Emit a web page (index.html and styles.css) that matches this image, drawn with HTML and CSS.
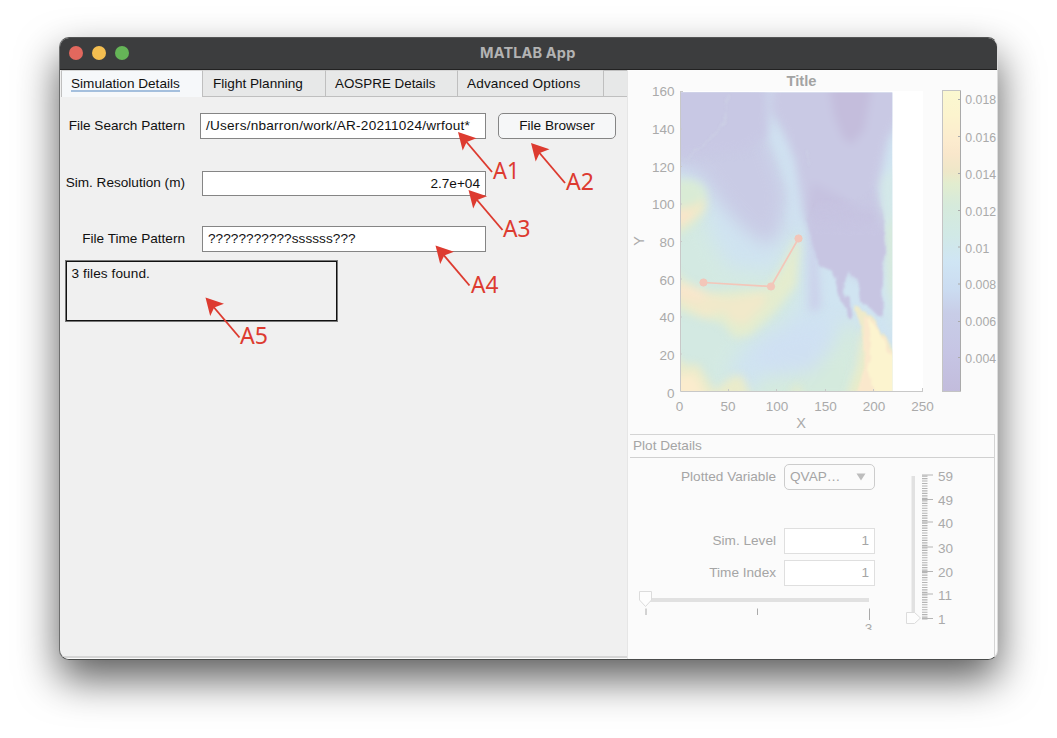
FILE: index.html
```html
<!DOCTYPE html>
<html lang="en">
<head>
<meta charset="utf-8">
<title>MATLAB App</title>
<link rel="stylesheet" href="styles.css">
</head>
<body>
<main class="window">
  <header class="titlebar">
    <div class="lights"><i class="light close"></i><i class="light minimize"></i><i class="light zoom"></i></div>
    <h1 class="app-title">MATLAB App</h1>
  </header>
  <div class="content">
    <section class="left">
      <nav class="tabs">
        <span class="tab active"><span class="tab-text">Simulation Details</span></span>
        <span class="tab t2">Flight Planning</span>
        <span class="tab t3">AOSPRE Details</span>
        <span class="tab t4">Advanced Options</span>
        <span class="tab-rest"></span>
      </nav>
      <div class="form">
        <div class="row r1"><label>File Search Pattern</label><div class="field path"><span>/Users/nbarron/work/AR-20211024/wrfout*</span></div><button class="browse">File Browser</button></div>
        <div class="row r2"><label>Sim. Resolution (m)</label><div class="field num">2.7e+04</div></div>
        <div class="row r3"><label>File Time Pattern</label><div class="field pattern">???????????ssssss???</div></div>
        <div class="message">3 files found.</div>
      </div>
    </section>
    <section class="right">
      <svg class="chart" width="367" height="364" viewBox="630 70 367 364">
        <defs>
          <clipPath id="area"><rect x="681" y="92.5" width="211.3" height="298.5"/></clipPath>
          <filter id="soft" x="-30%" y="-30%" width="160%" height="160%" color-interpolation-filters="sRGB"><feGaussianBlur stdDeviation="9"/></filter>
          <filter id="mid" x="-50%" y="-30%" width="200%" height="160%" color-interpolation-filters="sRGB"><feGaussianBlur stdDeviation="4"/></filter>
          <filter id="edge" x="-20%" y="-20%" width="140%" height="140%" color-interpolation-filters="sRGB"><feTurbulence type="fractalNoise" baseFrequency="0.13 0.06" numOctaves="3" seed="4" result="n"/><feDisplacementMap in="SourceGraphic" in2="n" scale="7" xChannelSelector="R" yChannelSelector="G"/><feGaussianBlur stdDeviation="0.9"/></filter>
          <linearGradient id="fade" x1="0" y1="0" x2="0" y2="1"><stop offset="0" stop-color="#c7c5e2" stop-opacity="0"/><stop offset=".35" stop-color="#c7c5e2"/><stop offset="1" stop-color="#c7c5e2"/></linearGradient>
          <linearGradient id="bar" x1="0" y1="0" x2="0" y2="1">
            <stop offset="0" stop-color="#fbf8d0"/><stop offset=".08" stop-color="#fcf4ce"/><stop offset=".17" stop-color="#fcebce"/><stop offset=".21" stop-color="#f9e7cb"/><stop offset=".27" stop-color="#eee7c8"/><stop offset=".31" stop-color="#e2edcf"/><stop offset=".38" stop-color="#d6eadb"/><stop offset=".48" stop-color="#d1e9e6"/><stop offset=".57" stop-color="#cfe5f4"/><stop offset=".66" stop-color="#cbdcf1"/><stop offset=".74" stop-color="#c8cde7"/><stop offset=".87" stop-color="#c6c5e4"/><stop offset="1" stop-color="#c2bcdc"/>
          </linearGradient>
        </defs>
        <rect x="680" y="91" width="243" height="300" fill="#fff"/>
        <g clip-path="url(#area)">
          <rect x="681" y="92" width="212" height="300" fill="#d0e4f1"/>
          <g filter="url(#soft)">
            <path fill="#d3e9e2" d="M660 185L700 195 712 240 730 268 775 272 797 225 800 300 780 325 745 345 728 370 760 410H660Z"/>
            <path fill="#d4eadd" d="M845 320L862 330 860 410H745L760 378 810 372 835 345Z"/>
            <path fill="#cfe0f2" d="M765 335L825 318 830 350 812 372 775 375 752 362Z"/>
            <path fill="#c9cbe5" d="M655 65H770L768 135 782 175 788 198 779 237 765 245 745 230 725 210 712 192 700 175 655 163Z"/>
          </g>
          <g filter="url(#mid)">
            <path fill="#c8c8e4" d="M660 75H768V135L745 150 690 155 660 160Z"/>
            <path fill="#c9c9e4" d="M772 75H905V110L888 140 878 188 880 215 882 245 879 270 870 285 845 270 825 262 812 240 804 215 799 185 794 158 782 130 771 112Z"/>
            <path fill="#cbd0ea" d="M809 228L817 255 821 305 815 313 809 309Z"/>
            <path fill="#cfe0f0" d="M767 85H769L772 125 789 143 797 170 800 212 797 232 790 222 791 190 780 158 769 132Z"/>
            <path fill="#c4bddc" d="M829 85H872L864 130 852 144 843 138 834 115Z"/>
            <path fill="#c6c2e0" d="M812 182L838 195 858 210 876 212 881 250 870 268 835 262 818 248 806 212Z"/>
            <path fill="#d3e8e8" d="M880 180L896 165V340L887 310 884 260Z"/>
            <path fill="#d7ead9" d="M887 230L898 210V310L889 290Z"/>
          </g>
          <path fill="url(#fade)" filter="url(#edge)" d="M807 218L820 200 860 200 876 188 883 216 886 247 882 271 883 316 877 315 868 306 860 301 857 280 847 272 844 290 854 314 851 318 840 298 833 272 825 268 818 264Z"/>
          <g filter="url(#mid)">
            <path fill="#d9ebd5" d="M672 181Q697 175 706 190L707 208 695 226 672 240Z"/>
            <path fill="#f0e9c8" d="M672 209L693 205 706 198 703 212 680 230H672Z"/>
            <path fill="#fbe5cb" d="M672 212L692 211 694 215 680 223H672Z"/>
            <path fill="#e4ecce" d="M672 268L684 280 710 292 768 288 782 268 797 236 800 245 796 285 775 312 750 335 735 338 722 323 700 318 672 308Z"/>
            <path fill="#f1e9ca" d="M674 280L702 291 727 299 766 293 764 305 744 325 730 320 725 311 704 317 676 300Z"/>
            <path fill="#f9e6cc" d="M672 283L692 287 708 296 700 301 672 294Z"/>
            <path fill="#eaebca" d="M672 354L686 365 698 364 715 391 731 377 742 375 752 400H672Z"/>
            <path fill="#fbeccd" d="M672 376L695 374 708 400H672Z"/>
            <path fill="#e6ebca" d="M789 400L797 382 804 400Z"/>
            <path fill="#e8ecca" d="M862 330L898 353V400H845L856 367Z"/>
          </g>
          <g filter="url(#edge)">
            <path fill="#eeeac9" d="M854 304L864 310 877 322 890 344 896 358V398H862L865 343 859 325Z"/>
            <path fill="#fae8cc" d="M864 314L879 326 890 350 897 358V398H856L865 366 864 336Z"/>
            <path fill="#fcf4cf" d="M869 320L880 330 888 352 898 359V398H876L867 371 871 343Z"/>
          </g>
          <path fill="none" stroke="#cfd5e6" stroke-width="1.500" opacity=".6" filter="url(#edge)" d="M728 94L725 121 711 140 683 160M807 150L809 166"/>
        </g>
        <g stroke="#c8c8c8" fill="none"><path d="M680.5 91V391.500H923M680 91.500h3M680 129h2M680 166.500h2M680 204h2M680 241.500h2M680 279h2M680 317h2M680 354h2M728.500 391v-2M776.500 391v-2M825.500 391v-2M873.500 391v-2M922.500 391v-3"/></g>
        <g stroke="#f3c6b9" fill="#f3c6b9"><path fill="none" stroke-width="1.7" d="M703.500 282.500L771 286.500 798.500 238.500"/><circle cx="703.500" cy="282.500" r="3.600"/><circle cx="771" cy="286.500" r="3.600"/><circle cx="798.500" cy="238.500" r="3.600"/></g>
        <rect x="942.500" y="90.500" width="18" height="301" fill="url(#bar)" stroke="#c4c4c4"/>
        <path fill="none" stroke="#aaa" d="M960.500 91V391M958 99.500h2M958 136.500h2M958 173.500h2M958 210.500h2M958 247h2M958 284h2M958 321.500h2M958 357.500h2"/>
        <g class="ticks y-ticks"><text x="674.500" y="96">160</text><text x="674.500" y="134">140</text><text x="674.500" y="171.500">120</text><text x="674.500" y="209">100</text><text x="674.500" y="247">80</text><text x="674.500" y="284.500">60</text><text x="674.500" y="322">40</text><text x="674.500" y="360">20</text><text x="674.500" y="397.500">0</text></g>
        <g class="ticks x-ticks"><text x="679.500" y="411">0</text><text x="728" y="411">50</text><text x="777" y="411">100</text><text x="825.500" y="411">150</text><text x="874" y="411">200</text><text x="922.500" y="411">250</text></g>
        <g class="ticks bar-ticks"><text x="965.300" y="104">0.018</text><text x="965.300" y="141.500">0.016</text><text x="965.300" y="178.500">0.014</text><text x="965.300" y="215.500">0.012</text><text x="965.300" y="252.500">0.01</text><text x="965.300" y="289">0.008</text><text x="965.300" y="326">0.006</text><text x="965.300" y="363">0.004</text></g>
        <text class="plot-title" x="801.500" y="86">Title</text>
        <text class="axis" x="801" y="428">X</text>
        <text class="axis" transform="translate(644 241) rotate(-90)">Y</text>
      </svg>
      <div class="panel">
        <h2 class="panel-title">Plot Details</h2>
        <div class="panel-body">
          <div class="controls">
            <div class="control c1"><label>Plotted Variable</label><div class="select"><span>QVAP…</span><svg width="10" height="8" viewBox="0 0 10 8"><path d="M.5.5H9.500L5 7.500Z" fill="#bdbdbd"/></svg></div></div>
            <div class="control c2"><label>Sim. Level</label><div class="small-field">1</div></div>
            <div class="control c3"><label>Time Index</label><div class="small-field">1</div></div>
            <svg class="hslider" width="245" height="42" viewBox="635 588 245 42"><rect x="646" y="598" width="223" height="4" fill="#e1e1e1"/><path d="M639.500 591.500H651.500V600L645.500 606.500 639.500 600Z" fill="#fdfdfd" stroke="#dcdcdc"/><path d="M646 608.500V615M757.500 608.500V615M869.500 608.500V620" stroke="#aaa"/><text class="ticks" x="868.500" y="632.500" text-anchor="middle">3</text></svg>
          </div>
          <svg class="vslider" width="60" height="170" viewBox="900 465 60 170">
            <rect x="911.500" y="476" width="3.500" height="142" fill="#e1e1e1"/>
            <path d="M924.750 475.500V619.500" stroke="#b4b4b4" stroke-width="5.500" stroke-dasharray="1.150 1.325"/>
            <path d="M922 475h11M922 499.500h11M922 522h11M922 547h11M922 571.500h11M922 594h11M922 618.500h11" stroke="#b5b5b5"/>
            <path d="M906.500 612.500H914.500L920.500 618 914.500 623.500H906.500Z" fill="#fdfdfd" stroke="#dcdcdc"/>
            <g class="ticks v-ticks"><text x="938" y="480.500">59</text><text x="938" y="505">49</text><text x="938" y="527.500">40</text><text x="938" y="552.500">30</text><text x="938" y="577">20</text><text x="938" y="599.500">11</text><text x="938" y="624">1</text></g>
          </svg>
        </div>
      </div>
    </section>
  </div>
</main>
<svg class="annotations" width="1057" height="738" viewBox="0 0 1057 738">
  <defs><g id="arrow"><path d="M6 7L34 40" stroke="#dd3b30" stroke-width="1.900" fill="none"/><path d="M0 0L18.500 6.200 8.700 10 4.700 18.500Z" fill="#dd3b30"/></g></defs>
  <use href="#arrow" x="458" y="132"/><use href="#arrow" x="531" y="143"/><use href="#arrow" x="468.500" y="190"/><use href="#arrow" x="435.500" y="245.500"/><use href="#arrow" x="205.500" y="297.500"/>
  <text x="493" y="179" textLength="26.500" lengthAdjust="spacingAndGlyphs">A1</text><text x="566" y="190" textLength="28" lengthAdjust="spacingAndGlyphs">A2</text><text x="503" y="237" textLength="27.500" lengthAdjust="spacingAndGlyphs">A3</text><text x="471" y="293" textLength="27.500" lengthAdjust="spacingAndGlyphs">A4</text><text x="240" y="344" textLength="28" lengthAdjust="spacingAndGlyphs">A5</text>
</svg>
</body>
</html>
```

FILE: styles.css
```css
* { box-sizing: border-box; }
body { margin: 0; height: 738px; padding: 37px 59px 0 59px; overflow: hidden; background: #fff; font: 13.600px "Liberation Sans", Arial, sans-serif; color: #111; }
.window { width: 939px; height: 623px; display: flex; flex-direction: column; border-radius: 10px; overflow: hidden; background: #f0f0f0; border: 1px solid #6d6e6e; border-top-color: #535454; border-right-color: #dcdcdc; border-bottom-color: #4a4c4b; box-shadow: 0 19px 42px rgba(0,0,0,.64); }
.titlebar { flex: none; height: 32px; display: grid; grid-template-columns: 1fr auto 1fr; align-items: center; padding: 0 10px 2px 8.500px; background: #3c3d3e; border-bottom: 1px solid #222; }
.lights { display: flex; gap: 9px; }
.light { width: 14px; height: 14px; border-radius: 50%; }
.close { background: #e2685e; }
.minimize { background: #f4be50; }
.zoom { background: #65b557; }
.app-title { margin: 0; font: 700 14.500px Inter, sans-serif; letter-spacing: .15px; color: #b3b3b3; }
.content { flex: 1; display: flex; min-height: 0; }
.left { width: 567px; padding-left: 1px; display: flex; flex-direction: column; border-bottom: 1px solid #fafafa; box-shadow: inset 0 -2px #d5d5d5; }
.tabs { height: 27px; display: flex; line-height: 26px; }
.tab { background: #e7e8e8; border-left: 1px solid #bfbfbf; border-bottom: 1px solid #bfbfbf; border-top: 1px solid #d5d5d5; padding-left: 9px; white-space: nowrap; }
.tab.active { width: 141px; background: #f6f8fa; border-bottom: 0; }
.tab-text { display: inline-block; line-height: 15px; border-bottom: 2px solid #a4bfdd; height: 16px; }
.t2 { width: 123px; padding-left: 10px; }
.t3 { width: 132px; font-size: 13.400px; }
.t4 { width: 146px; letter-spacing: .15px; }
.tab-rest { flex: 1; background: #e7e8e8; border: solid #bfbfbf; border-width: 1px 0 1px 1px; }
.form { padding: 16px 0 0 4px; }
.row { display: flex; height: 26px; align-items: center; }
.row label { width: 120px; text-align: right; margin-right: 17px; padding-bottom: 1px; white-space: nowrap; }
.field { width: 284px; height: 26px; border: 1px solid #858585; background: #fff; line-height: 23px; padding: 0 5px; white-space: nowrap; }
.path { width: 286px; margin-left: -2px; padding-left: 5px; letter-spacing: .23px; }
.num { text-align: right; height: 25px; }
.pattern { letter-spacing: .05px; }
.r2 { margin-top: 31px; }
.r3 { margin-top: 30px; }
.browse { width: 118px; height: 26px; margin-left: 12px; padding: 0 0 1px; border: 1px solid #858585; border-radius: 5px; background: #f6f7f8; font: inherit; color: inherit; }
.message { width: 271px; height: 60px; margin: 9px 0 0 .500px; border: 1px solid #111; outline: .500px solid #777; padding: 4px 5px; line-height: 16px; letter-spacing: .1px; }
.right { flex: 1; min-width: 0; border-left: 1px solid #e6e6e6; padding-left: 2px; background: #fbfbfb; color: #a5a5a5; }
.chart { display: block; }
.ticks { font-size: 13.500px; fill: #aaa; }
.y-ticks { text-anchor: end; }
.x-ticks { text-anchor: middle; }
.bar-ticks { font-size: 12.300px; }
.plot-title { font-size: 14.700px; font-weight: 700; fill: #a3a3a3; text-anchor: middle; }
.axis { font-size: 14.500px; fill: #aaa; text-anchor: middle; }
.panel { width: 365px; height: 223px; border: 1px solid #d4d4d4; border-left: 0; border-bottom: 0; }
.panel-title { height: 23px; margin: 0; padding-left: 3px; font: inherit; line-height: 22px; border-bottom: 1px solid #d0d0d0; }
.panel-body { display: flex; padding-left: 5px; }
.controls { width: 265px; }
.control { display: flex; align-items: center; justify-content: flex-end; gap: 8px; width: 240px; height: 26px; }
.control label { padding-bottom: 1px; }
.c1 { margin-top: 6px; }
.c2 { margin-top: 38px; }
.c3 { margin-top: 6px; }
.select { width: 91px; height: 26px; border: 1px solid #ccc; border-radius: 5px; display: flex; align-items: center; justify-content: space-between; padding: 0 8px 1px 5px; }
.small-field { width: 91px; height: 26px; border: 1px solid #dfdfdf; background: #fff; text-align: right; line-height: 24px; padding-right: 5px; }
.hslider { display: block; margin-top: 2px; }
.vslider { margin-top: 7px; }
.annotations { position: absolute; left: 0; top: 0; pointer-events: none; }
.annotations text { font: 23.500px "Noto Sans", sans-serif; fill: #dd3b30; }
```
